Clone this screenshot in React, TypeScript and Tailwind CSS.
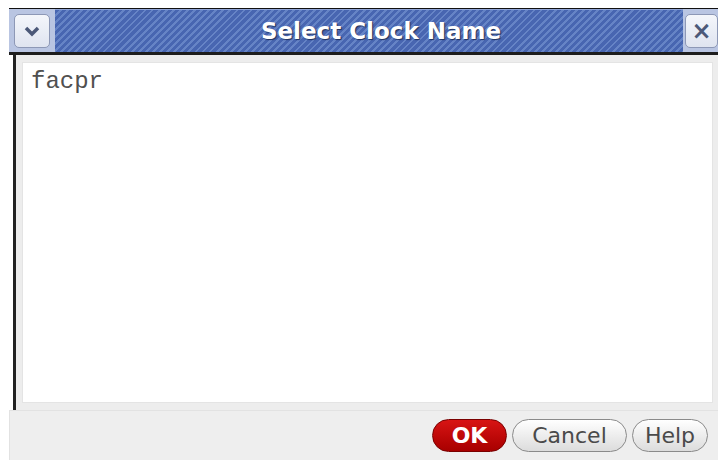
import React from 'react';

function TitleButton({ children }: { children: React.ReactNode }) {
	return (
		<div className="flex h-[34px] w-[36px] items-center justify-center rounded-[5px] border border-[#8d98b6] bg-gradient-to-b from-[#f4f6fb] to-[#dfe4f0] text-[#4b5878]">
			{children}
		</div>
	);
}

function PillButton({ label, width, primary }: { label: string; width: string; primary?: boolean }) {
	if (primary) {
		return (
			<button
				type="button"
				className={`flex h-[33px] ${width} items-center justify-center rounded-full border border-[#7a0000] bg-gradient-to-b from-[#d81414] to-[#a80000] text-[22px] font-bold text-white`}
			>
				{label}
			</button>
		);
	}
	return (
		<button
			type="button"
			className={`flex h-[33px] ${width} items-center justify-center rounded-full border border-[#8a8a8a] bg-gradient-to-b from-white to-[#dcdcdc] text-[22px] text-[#4a4a4a]`}
		>
			{label}
		</button>
	);
}

export default function App() {
	return (
		<div
			className="h-[462px] w-[718px] overflow-hidden bg-white pl-[9px] pt-[8px]"
			style={{ fontFamily: '"DejaVu Sans", sans-serif' }}
		>
			<div className="flex h-[452px] flex-col">
				{/* title bar */}
				<div className="flex h-[44px] border-t border-[#111] bg-[#b9c5e2]">
					<div className="flex w-[46px] items-center justify-center">
						<TitleButton>
							<svg width="18" height="12" viewBox="0 0 18 12">
								<path d="M3 3 L9 9 L15 3" fill="none" stroke="currentColor" strokeWidth="3.5" />
							</svg>
						</TitleButton>
					</div>
					<div className="flex flex-1 items-center justify-center border-t border-[#8ea3d6] bg-[repeating-linear-gradient(135deg,#4866b1_0px,#4866b1_3px,#6684c6_3px,#6684c6_5px)] pl-[24px]">
						<span className="text-[23px] font-bold text-white [text-shadow:1px_1px_1px_#1f2f5a]">
							Select Clock Name
						</span>
					</div>
					<div className="flex w-[35px] items-center justify-end pl-[2px]">
						<TitleButton>
							<span className="text-[24px] font-bold leading-none">×</span>
						</TitleButton>
					</div>
				</div>
				<div className="h-[3px] bg-[#1d1d1d]" />

				{/* body */}
				<div className="flex flex-1 bg-white">
					<div className="flex flex-1 pl-[4px]">
						<div className="w-[3px] bg-[#222]" />
						<div className="flex flex-1 bg-[#ededed] pb-[7px] pl-[6px] pr-[5px] pt-[7px]">
							<div className="flex-1 border border-[#e4e4e4] bg-white px-[8px] pt-[1px]">
								<span
									className="text-[24px] text-[#505050]"
									style={{ fontFamily: '"Liberation Mono", monospace' }}
								>
									facpr
								</span>
							</div>
						</div>
					</div>
				</div>

				{/* button row */}
				<div className="flex h-[50px] items-center justify-end gap-[5px] border-l border-t border-[#e2e2e2] bg-[#eeeeee] pr-[10px]">
					<PillButton label="OK" width="w-[75px]" primary />
					<PillButton label="Cancel" width="w-[115px]" />
					<PillButton label="Help" width="w-[76px]" />
				</div>
			</div>
		</div>
	);
}
